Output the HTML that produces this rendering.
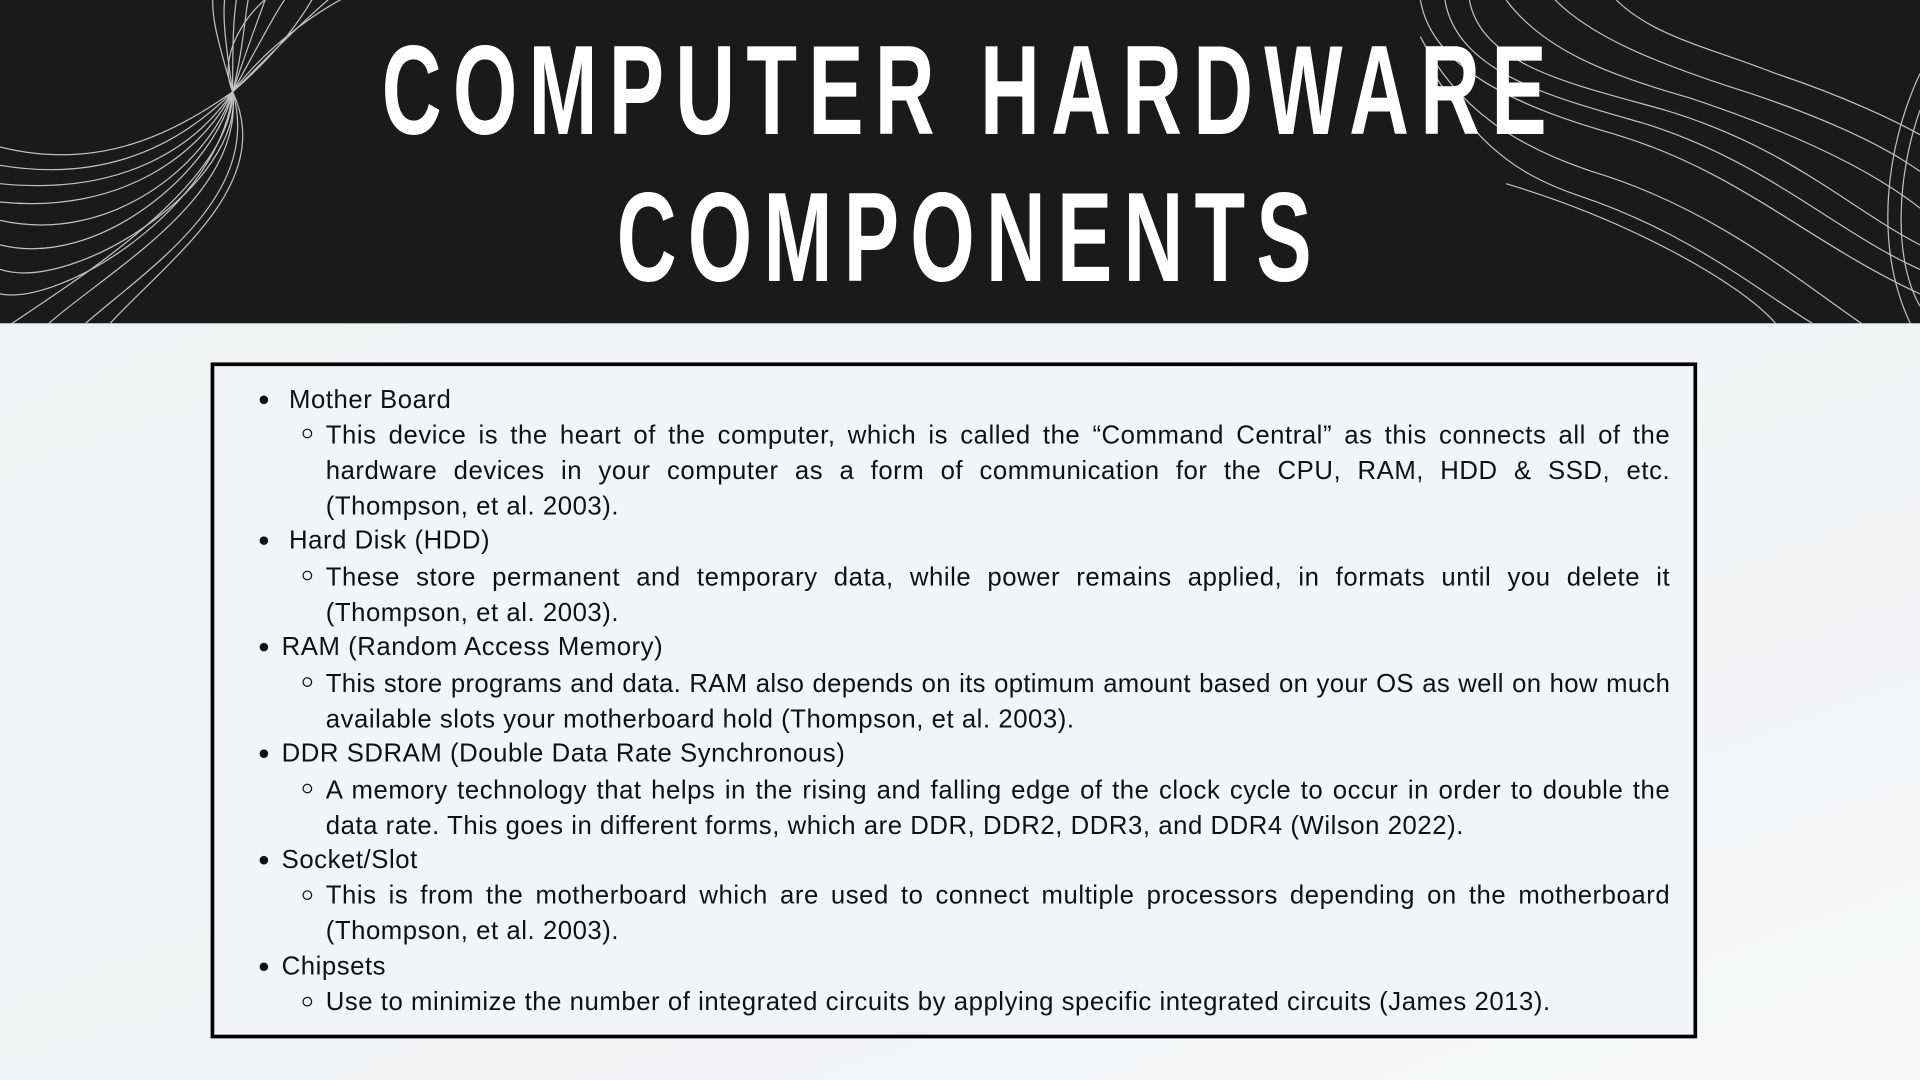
<!DOCTYPE html>
<html><head><meta charset="utf-8"><style>
html,body{margin:0;padding:0;width:1920px;height:1080px;overflow:hidden;background:#f3f4f5}
#w{position:absolute;left:0;top:0;width:1568px;height:882px;transform:scale(1.22449);transform-origin:0 0;background:linear-gradient(160deg,#eef0f1,#f6f6f7)}
#hdr{position:absolute;left:0;top:0;width:1568px;height:264px;background:#1a1a1a;overflow:hidden}
.t{position:absolute;left:8px;width:1568px;text-align:center;color:#fff;font-family:"Liberation Sans",sans-serif;font-weight:bold;font-size:96px;letter-spacing:13px;line-height:100px;transform:scale(0.705,1.08)}
#box{position:absolute;left:172px;top:296px;width:1208px;height:546px;border:3px solid #000;box-sizing:content-box;background:#f3f4f5}
.l{position:absolute;font-family:"Liberation Sans",sans-serif;font-size:21px;color:#111;line-height:29px;letter-spacing:0.45px}
.b{position:absolute;width:7px;height:7px;border-radius:50%;background:#111}
.c{position:absolute;width:6px;height:6px;border-radius:50%;border:1.3px solid #111}
.j{position:absolute;left:266px;width:1098px;font-family:"Liberation Sans",sans-serif;font-size:21px;color:#111;line-height:29px;text-align:justify;text-align-last:left;letter-spacing:0.45px}
</style></head><body><div id="w">
<div id="hdr">
<svg width="1568" height="264" style="position:absolute;left:0;top:0" fill="none" stroke="#ddd" stroke-width="1">
<g opacity="0.85">
<path d="M0 120 C80 140 140 110 190 75 C230 40 250 10 260 -10"/>
<path d="M0 135 C90 150 150 115 190 75 C225 40 260 5 280 -10"/>
<path d="M0 150 C100 160 160 120 190 75 C220 35 270 0 300 -10"/>
<path d="M0 165 C100 175 165 125 190 75 C215 30 230 0 240 -10"/>
<path d="M0 180 C90 200 170 135 190 75 C205 30 215 5 220 -10"/>
<path d="M0 200 C80 220 175 140 190 75 C200 35 200 5 205 -10"/>
<path d="M10 264 C60 230 190 150 190 75 C190 40 190 10 195 -10"/>
<path d="M40 264 C90 220 200 160 190 75 C185 40 180 10 185 -10"/>
<path d="M70 264 C120 220 215 160 190 75 C180 40 170 10 175 -10"/>
<path d="M90 264 C140 210 225 150 190 75 C175 40 210 0 230 -10"/>
<path d="M0 220 C60 240 200 150 190 75"/>
<path d="M0 240 C50 250 180 170 190 75"/>
</g>
<g opacity="0.85">
<path d="M1160 0 C1170 60 1250 90 1320 110 C1420 140 1480 200 1568 240"/>
<path d="M1180 0 C1190 60 1270 80 1340 100 C1440 130 1500 190 1568 220"/>
<path d="M1200 0 C1210 55 1290 70 1360 90 C1460 120 1510 170 1568 200"/>
<path d="M1160 30 C1190 90 1240 120 1300 140 C1400 170 1470 230 1520 264"/>
<path d="M1165 50 C1200 110 1230 140 1290 160 C1380 190 1440 240 1480 264"/>
<path d="M1230 0 C1260 40 1310 60 1380 80 C1470 110 1530 140 1568 170"/>
<path d="M1270 0 C1300 30 1350 50 1410 70 C1490 95 1540 120 1568 140"/>
<path d="M1320 0 C1350 30 1400 40 1450 60 C1510 80 1550 100 1568 110"/>
<path d="M1568 60 C1540 120 1530 200 1560 264"/>
<path d="M1568 90 C1550 140 1545 210 1568 250"/>
<path d="M1230 150 C1330 180 1420 230 1450 264"/>
</g>
</svg>
<div class="t" style="top:25px">COMPUTER HARDWARE</div>
<div class="t" style="top:145px">COMPONENTS</div>
</div>
<div id="box"></div>
<div class="b" style="left:212px;top:323px"></div><div class="l" style="left:236px;top:312px">Mother Board</div>
<div class="c" style="left:247px;top:350px"></div>
<div class="j" style="top:341px">This device is the heart of the computer, which is called the “Command Central” as this connects all of the hardware devices in your computer as a form of communication for the CPU, RAM, HDD &amp; SSD, etc. (Thompson, et al. 2003).</div>
<div class="b" style="left:212px;top:438px"></div><div class="l" style="left:236px;top:427px">Hard Disk (HDD)</div>
<div class="c" style="left:247px;top:466px"></div>
<div class="j" style="top:457px">These store permanent and temporary data, while power remains applied, in formats until you delete it (Thompson, et al. 2003).</div>
<div class="b" style="left:212px;top:525px"></div><div class="l" style="left:230px;top:514px">RAM (Random Access Memory)</div>
<div class="c" style="left:247px;top:553px"></div>
<div class="j" style="top:544px;letter-spacing:0.25px"><div style="text-align-last:justify">This store programs and data. RAM also depends on its optimum amount based on your OS as well on how much</div><div style="letter-spacing:0.45px">available slots your motherboard hold (Thompson, et al. 2003).</div></div>
<div class="b" style="left:212px;top:612px"></div><div class="l" style="left:230px;top:601px">DDR SDRAM (Double Data Rate Synchronous)</div>
<div class="c" style="left:247px;top:640px"></div>
<div class="j" style="top:631px">A memory technology that helps in the rising and falling edge of the clock cycle to occur in order to double the data rate. This goes in different forms, which are DDR, DDR2, DDR3, and DDR4 (Wilson 2022).</div>
<div class="b" style="left:212px;top:699px"></div><div class="l" style="left:230px;top:688px">Socket/Slot</div>
<div class="c" style="left:247px;top:727px"></div>
<div class="j" style="top:717px">This is from the motherboard which are used to connect multiple processors depending on the motherboard (Thompson, et al. 2003).</div>
<div class="b" style="left:212px;top:786px"></div><div class="l" style="left:230px;top:775px">Chipsets</div>
<div class="c" style="left:247px;top:814px"></div>
<div class="j" style="top:804px">Use to minimize the number of integrated circuits by applying specific integrated circuits (James 2013).</div>
</div></body></html>
